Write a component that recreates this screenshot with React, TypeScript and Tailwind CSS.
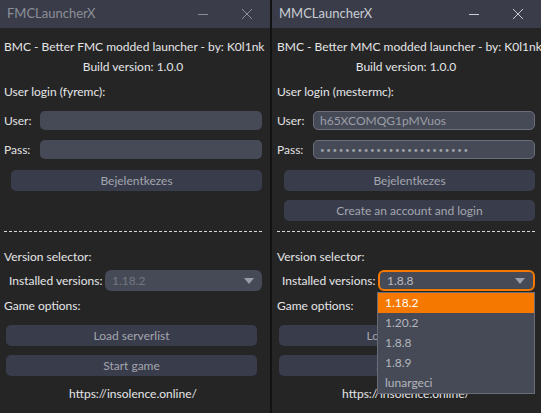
import React from "react"

const font = { fontFamily: 'Lato, "Noto Sans", sans-serif' }

function TitleBar({ title, active }: { title: string; active: boolean }) {
  const c = active ? "text-[#c9ccd3]" : "text-[#8b8f98]"
  return (
    <div className="flex h-[28px] items-center bg-[#3a3d49] pl-[7px]">
      <span className={`flex-1 text-[13px] ${c}`}>{title}</span>
      <svg width="12" height="12" viewBox="0 0 12 12" className={`mr-[32px] ${c}`}>
        <path d="M1 6.5h10" stroke="currentColor" strokeWidth="1" />
      </svg>
      <svg width="12" height="12" viewBox="0 0 12 12" className={`mr-[17px] ${c}`}>
        <path d="M1 1l10 10M11 1L1 11" stroke="currentColor" strokeWidth="1" />
      </svg>
    </div>
  )
}

function Field({ label, value, secret, filled }: { label: string; value?: string; secret?: boolean; filled?: boolean }) {
  return (
    <div className="flex h-[19px] items-center">
      <span className="w-[36px] shrink-0 text-[12px] text-[#e2e2e2]">{label}</span>
      <div
        className={`flex h-[19px] flex-1 items-center overflow-hidden whitespace-nowrap rounded-[5px] bg-[#464a57] px-[6px] text-[#9b9ea6] ${
          filled ? "border border-[#6a6e7a]" : ""
        } ${secret ? "text-[8px] tracking-[1.6px]" : "text-[12px]"}`}
      >
        {value}
      </div>
    </div>
  )
}

function Btn({ children, className = "" }: { children: React.ReactNode; className?: string }) {
  return (
    <div
      className={`flex h-[21px] items-center justify-center rounded-[5px] bg-[#393c4b] text-[12px] text-[#a3a6ae] ${className}`}
    >
      {children}
    </div>
  )
}

function Arrow() {
  return (
    <svg width="10" height="6" viewBox="0 0 10 6">
      <path d="M0 0h10L5 6z" fill="#9a9da5" />
    </svg>
  )
}

function Launcher({ name, user, active }: { name: string; user: string; active: boolean }) {
  const pad = active ? "pl-[5px] pr-[6px]" : "pl-[4px] pr-[8px]"
  return (
    <div className="flex h-full flex-col bg-[#252526]" style={font}>
      <TitleBar title={`${name}LauncherX`} active={active} />
      <div className={`flex flex-1 flex-col ${pad}`}>
        <div className="mt-[9px] h-[20px] whitespace-nowrap text-[12px] leading-[20px] text-[#e6e6e6]">
          BMC - Better {name} modded launcher - by: K0l1nk
        </div>
        <div className="h-[20px] text-center text-[12px] leading-[20px] text-[#e6e6e6]">Build version: 1.0.0</div>
        <div className="mt-[5px] h-[20px] text-[12px] leading-[20px] text-[#e6e6e6]">User login ({user}):</div>
        <div className="mt-[9px]">
          <Field label="User:" value={active ? "h65XCOMQG1pMVuos" : ""} filled={active} />
        </div>
        <div className="mt-[10px]">
          <Field label="Pass:" value={active ? "••••••••••••••••••••••••" : ""} secret filled={active} />
        </div>
        <div className="flex h-[72px] flex-col gap-[9px] pl-[7px] pt-[11px]">
          <Btn>Bejelentkezes</Btn>
          {active && <Btn>Create an account and login</Btn>}
        </div>
        <div className="border-t border-dashed border-[#d8d8d8]" />
        <div className="mt-[15px] h-[20px] text-[12px] leading-[20px] text-[#e6e6e6]">Version selector:</div>
        <div className="relative mt-[3px] flex h-[21px] items-center pl-[5px]">
          <span className="w-[96px] shrink-0 whitespace-nowrap text-[12px] text-[#e6e6e6]">Installed versions:</span>
          <div
            className={`relative flex h-[21px] flex-1 items-center justify-between rounded-[6px] bg-[#464a57] pl-[7px] pr-[8px] text-[12px] ${
              active ? "border-2 border-[#f57900] text-[#b9bcc3]" : "text-[#73777f]"
            }`}
          >
            <span>{active ? "1.8.8" : "1.18.2"}</span>
            <Arrow />
            {active && (
              <div className="absolute left-[-3px] right-[-2px] top-[20px] z-10 border border-[#6a6d77] bg-[#464a56]">
                {["1.18.2", "1.20.2", "1.8.8", "1.8.9", "lunargeci"].map((v, i) => (
                  <div
                    key={v}
                    className={`flex h-[20px] items-center pl-[7px] text-[12px] ${
                      i === 0 ? "bg-[#f57900] text-white" : "text-[#b3b6bd]"
                    }`}
                  >
                    {v}
                  </div>
                ))}
              </div>
            )}
          </div>
        </div>
        <div className="mt-[5px] h-[20px] text-[12px] leading-[20px] text-[#e6e6e6]">Game options:</div>
        <div className="flex flex-col gap-[9px] pl-[2px] pr-[5px] pt-[9px]">
          <Btn>Load serverlist</Btn>
          <Btn>Start game</Btn>
        </div>
        <div className="mt-[8px] h-[20px] text-center text-[12px] leading-[20px] text-[#e6e6e6]">
          https://insolence.online/
        </div>
      </div>
    </div>
  )
}

export default function App() {
  return (
    <div className="flex h-[413px] w-[541px] overflow-hidden bg-[#151515]">
      <div className="w-[270px]">
        <Launcher name="FMC" user="fyremc" active={false} />
      </div>
      <div className="w-[2px] bg-[#121212]" />
      <div className="w-[269px]">
        <Launcher name="MMC" user="mestermc" active={true} />
      </div>
    </div>
  )
}
